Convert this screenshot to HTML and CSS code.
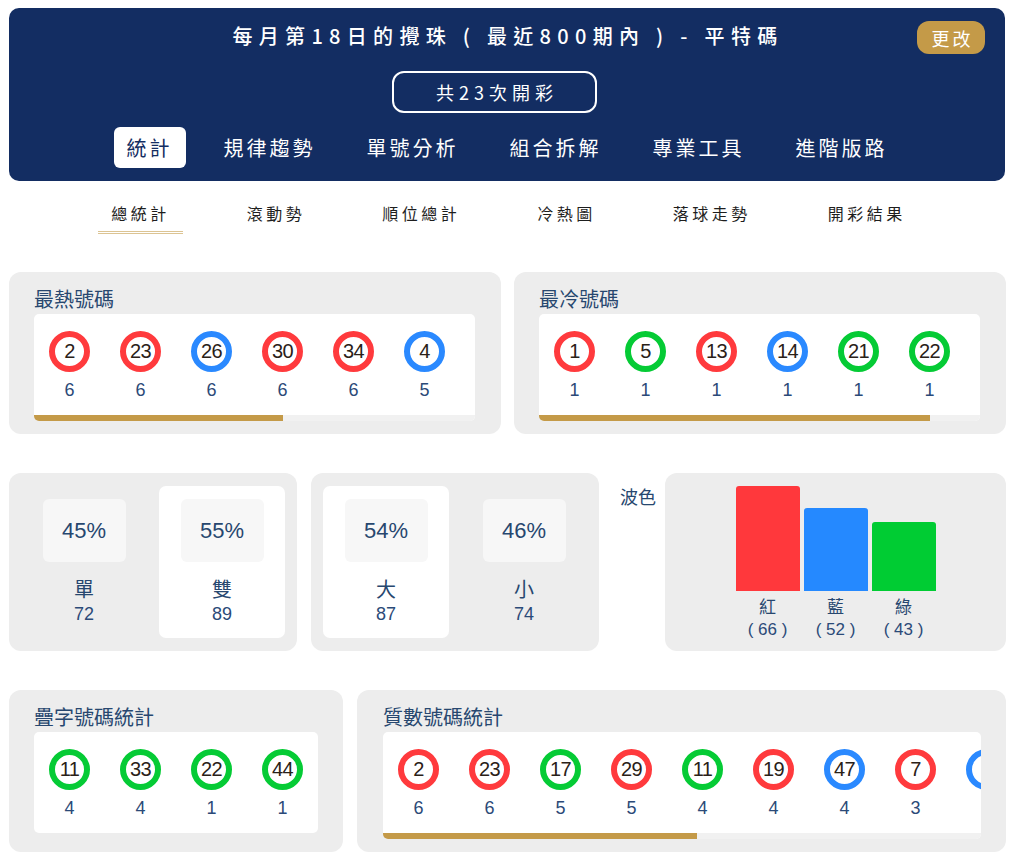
FILE: index.html
```html
<!DOCTYPE html>
<html lang="zh-Hant">
<head>
<meta charset="utf-8">
<title>平特碼統計</title>
<link rel="stylesheet" href="styles.css">
</head>
<body>
<div class="page">
  <header class="hero">
    <h1 class="hero-title">每月第18日的攪珠 ( 最近800期內 ) - 平特碼</h1>
    <button class="change-btn">更改</button>
    <div class="count-row"><div class="count-box">共23次開彩</div></div>
    <nav class="tabs">
      <a class="tab active">統計</a>
      <a class="tab">規律趨勢</a>
      <a class="tab">單號分析</a>
      <a class="tab">組合拆解</a>
      <a class="tab">專業工具</a>
      <a class="tab">進階版路</a>
    </nav>
  </header>

  <nav class="subnav">
    <a class="sub active">總統計</a>
    <a class="sub">滾動勢</a>
    <a class="sub">順位總計</a>
    <a class="sub">冷熱圖</a>
    <a class="sub">落球走勢</a>
    <a class="sub">開彩結果</a>
  </nav>

  <section class="row row-top">
    <div class="card card-half">
      <h2 class="card-title">最熱號碼</h2>
      <div class="panel">
        <div class="balls">
          <div class="ball-item"><span class="ball red">2</span><span class="cnt">6</span></div>
          <div class="ball-item"><span class="ball red">23</span><span class="cnt">6</span></div>
          <div class="ball-item"><span class="ball blue">26</span><span class="cnt">6</span></div>
          <div class="ball-item"><span class="ball red">30</span><span class="cnt">6</span></div>
          <div class="ball-item"><span class="ball red">34</span><span class="cnt">6</span></div>
          <div class="ball-item"><span class="ball blue">4</span><span class="cnt">5</span></div>
        </div>
        <div class="track"><div class="fill" style="width:56.5%"></div></div>
      </div>
    </div>
    <div class="card card-half">
      <h2 class="card-title">最冷號碼</h2>
      <div class="panel">
        <div class="balls">
          <div class="ball-item"><span class="ball red">1</span><span class="cnt">1</span></div>
          <div class="ball-item"><span class="ball green">5</span><span class="cnt">1</span></div>
          <div class="ball-item"><span class="ball red">13</span><span class="cnt">1</span></div>
          <div class="ball-item"><span class="ball blue">14</span><span class="cnt">1</span></div>
          <div class="ball-item"><span class="ball green">21</span><span class="cnt">1</span></div>
          <div class="ball-item"><span class="ball green">22</span><span class="cnt">1</span></div>
        </div>
        <div class="track"><div class="fill" style="width:88.7%"></div></div>
      </div>
    </div>
  </section>

  <section class="row row-mid">
    <div class="ratio-card">
      <div class="cell">
        <div class="tile">45%</div>
        <div class="cell-label">單</div>
        <div class="cell-num">72</div>
      </div>
      <div class="cell cell-white">
        <div class="tile">55%</div>
        <div class="cell-label">雙</div>
        <div class="cell-num">89</div>
      </div>
    </div>
    <div class="ratio-card">
      <div class="cell cell-white">
        <div class="tile">54%</div>
        <div class="cell-label">大</div>
        <div class="cell-num">87</div>
      </div>
      <div class="cell">
        <div class="tile">46%</div>
        <div class="cell-label">小</div>
        <div class="cell-num">74</div>
      </div>
    </div>
    <div class="wave-label">波色</div>
    <div class="wave-card">
      <div class="bars">
        <div class="bar-col"><div class="bar red-bg" style="height:105px"></div><div class="bar-name">紅</div><div class="bar-val">( 66 )</div></div>
        <div class="bar-col"><div class="bar blue-bg" style="height:83px"></div><div class="bar-name">藍</div><div class="bar-val">( 52 )</div></div>
        <div class="bar-col"><div class="bar green-bg" style="height:69px"></div><div class="bar-name">綠</div><div class="bar-val">( 43 )</div></div>
      </div>
    </div>
  </section>

  <section class="row row-bottom">
    <div class="card card-double">
      <h2 class="card-title">疊字號碼統計</h2>
      <div class="panel">
        <div class="balls">
          <div class="ball-item"><span class="ball green">11</span><span class="cnt">4</span></div>
          <div class="ball-item"><span class="ball green">33</span><span class="cnt">4</span></div>
          <div class="ball-item"><span class="ball green">22</span><span class="cnt">1</span></div>
          <div class="ball-item"><span class="ball green">44</span><span class="cnt">1</span></div>
        </div>
      </div>
    </div>
    <div class="card card-prime">
      <h2 class="card-title">質數號碼統計</h2>
      <div class="panel">
        <div class="balls">
          <div class="ball-item"><span class="ball red">2</span><span class="cnt">6</span></div>
          <div class="ball-item"><span class="ball red">23</span><span class="cnt">6</span></div>
          <div class="ball-item"><span class="ball green">17</span><span class="cnt">5</span></div>
          <div class="ball-item"><span class="ball red">29</span><span class="cnt">5</span></div>
          <div class="ball-item"><span class="ball green">11</span><span class="cnt">4</span></div>
          <div class="ball-item"><span class="ball red">19</span><span class="cnt">4</span></div>
          <div class="ball-item"><span class="ball blue">47</span><span class="cnt">4</span></div>
          <div class="ball-item"><span class="ball red">7</span><span class="cnt">3</span></div>
          <div class="ball-item"><span class="ball blue">3</span><span class="cnt">3</span></div>
        </div>
        <div class="track"><div class="fill" style="width:52.5%"></div></div>
      </div>
    </div>
  </section>
</div>
</body>
</html>
```

FILE: styles.css
```css
* { box-sizing: border-box; }

body {
  margin: 0;
  background: #ffffff;
  font-family: "Liberation Sans", "Noto Sans CJK TC", sans-serif;
  color: #27476f;
}

.page {
  width: 1006px;
  padding: 8px 0 0 9px;
}

/* ---------- hero ---------- */
.hero {
  position: relative;
  width: 996px;
  background: #132d62;
  border-radius: 10px;
  padding: 14px 0 13px;
  color: #ffffff;
  font-family: "Noto Sans CJK TC", sans-serif;
}

.hero-title {
  margin: 0;
  text-align: center;
  font-size: 20px;
  font-weight: 500;
  line-height: 28px;
  letter-spacing: 6.3px;
  padding-left: 2px;
}

.change-btn {
  position: absolute;
  top: 13px;
  right: 20px;
  width: 68px;
  height: 33px;
  border: none;
  border-radius: 12px;
  background: #c49a48;
  color: #ffffff;
  font-family: "Noto Sans CJK TC", sans-serif;
  font-size: 18px;
  letter-spacing: 3px;
  padding: 0 0 0 3px;
}

.count-row {
  display: flex;
  justify-content: center;
  margin-top: 21px;
  padding-right: 25px;
}

.count-box {
  width: 205px;
  height: 42px;
  border: 2px solid #ffffff;
  border-radius: 12px;
  display: flex;
  align-items: center;
  justify-content: center;
  font-size: 18px;
  letter-spacing: 5px;
  padding-left: 5px;
}

.tabs {
  display: flex;
  justify-content: center;
  gap: 25px;
  margin-top: 14px;
}

.tab {
  height: 41px;
  line-height: 41px;
  padding: 0 13px;
  font-size: 20px;
  letter-spacing: 3px;
  color: #ffffff;
  border-radius: 6px;
}

.tab.active {
  background: #ffffff;
  color: #132d62;
}

/* ---------- sub nav ---------- */
.subnav {
  display: flex;
  justify-content: center;
  gap: 51px;
  margin-top: 20px;
  padding-left: 2px;
  font-family: "Noto Sans CJK TC", sans-serif;
}

.sub {
  padding: 0 13px 6px;
  font-size: 16px;
  line-height: 24px;
  letter-spacing: 3.5px;
  color: #1e1e1e;
  border-bottom: 3px solid transparent;
}

.sub.active {
  border-bottom: 3px double #dcc493;
}

/* ---------- rows ---------- */
.row {
  display: flex;
  gap: 13px;
}

.row > * { flex-shrink: 0; }

.row-top { margin-top: 38px; }
.row-mid { margin-top: 39px; gap: 0; height: 178px; }
.row-bottom { margin-top: 39px; gap: 14px; }

.card {
  background: #ededed;
  border-radius: 12px;
  padding: 14px 25px 13px;
}

.card-half { width: 492px; padding-right: 26px; }
.card-double { width: 334px; }
.card-prime { width: 649px; padding-left: 26px; }

.card-title {
  margin: 0;
  font-size: 20px;
  font-weight: 400;
  line-height: 28px;
  color: #27476f;
}

.panel {
  background: #ffffff;
  border-radius: 5px;
  overflow: hidden;
}

.balls {
  display: flex;
  height: 101px;
  padding-top: 17px;
}

.ball-item {
  width: 71px;
  flex-shrink: 0;
  display: flex;
  flex-direction: column;
  align-items: center;
}

.ball {
  width: 41px;
  height: 41px;
  border: 6px solid;
  border-radius: 50%;
  display: flex;
  align-items: center;
  justify-content: center;
  font-family: "Liberation Sans", sans-serif;
  font-size: 20px;
  letter-spacing: -0.6px;
  color: #2a2118;
  background: #ffffff;
}

.ball.red { border-color: #ff3a3d; }
.ball.blue { border-color: #2a89ff; }
.ball.green { border-color: #05cb35; }

.cnt {
  margin-top: 6px;
  font-size: 18px;
  line-height: 24px;
  color: #2b4a78;
}

.track {
  height: 6px;
  background: #f1f1f1;
}

.fill {
  height: 100%;
  background: #c49a48;
}

/* ---------- ratio cards ---------- */
.ratio-card {
  width: 288px;
  background: #ededed;
  border-radius: 12px;
  padding: 13px 12px;
  display: flex;
  gap: 12px;
}

.ratio-card + .ratio-card { margin-left: 14px; }

.cell {
  width: 126px;
  border-radius: 7px;
  display: flex;
  flex-direction: column;
  align-items: center;
  padding-top: 13px;
}

.cell-white { background: #ffffff; }

.tile {
  width: 83px;
  height: 63px;
  background: #f7f7f7;
  border-radius: 6px;
  display: flex;
  align-items: center;
  justify-content: center;
  font-size: 22px;
  color: #27476f;
}

.cell-label {
  margin-top: 16px;
  font-size: 20px;
  line-height: 24px;
  color: #27476f;
}

.cell-num {
  margin-top: 1px;
  font-size: 18px;
  line-height: 22px;
  color: #2b4a78;
}

/* ---------- wave ---------- */
.wave-label {
  margin-left: 21px;
  margin-top: 13px;
  font-size: 18px;
  line-height: 24px;
  white-space: nowrap;
  color: #27476f;
}

.wave-card {
  margin-left: auto;
  width: 341px;
  background: #ededed;
  border-radius: 12px;
  padding-top: 13px;
  display: flex;
  justify-content: center;
}

.bars {
  display: flex;
  gap: 4px;
  align-items: flex-start;
}

.bar-col {
  width: 64px;
  height: 155px;
  display: flex;
  flex-direction: column;
  align-items: center;
  justify-content: flex-end;
}

.bar {
  width: 64px;
  border-radius: 3px 3px 0 0;
}

.red-bg { background: #ff383c; }
.blue-bg { background: #2589ff; }
.green-bg { background: #00cc33; }

.bar-name {
  margin-top: 6px;
  font-size: 17px;
  line-height: 22px;
  color: #27476f;
}

.bar-val {
  font-size: 17px;
  line-height: 22px;
  color: #2b4a78;
}
```
